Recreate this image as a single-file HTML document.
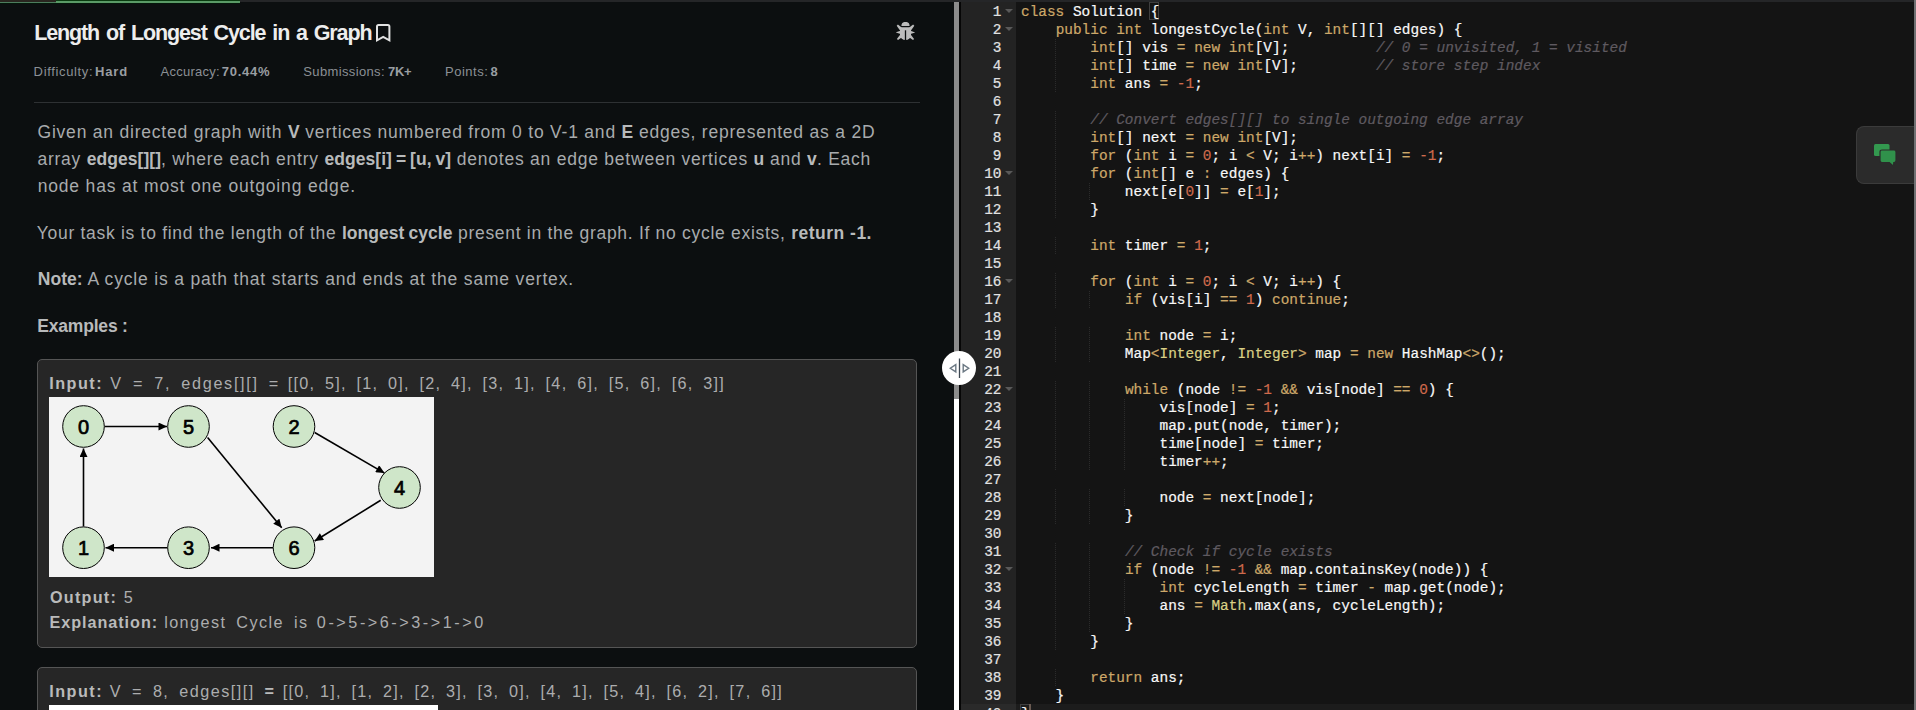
<!DOCTYPE html>
<html lang="en">
<head>
<meta charset="utf-8">
<title>Length of Longest Cycle in a Graph</title>
<style>
html,body{margin:0;padding:0;}
body{width:1916px;height:710px;overflow:hidden;background:#0c0f10;position:relative;font-family:"Liberation Sans",sans-serif;}
.abs{position:absolute;}
#topstrip{left:0;top:0;width:1916px;height:2px;background:#252628;}
#prog0{left:0;top:0;width:56px;height:3px;background:linear-gradient(#2a2620 66.6%,#4d7d5e 66.6%);}
#prog1{left:0;top:3px;width:240px;height:1px;background:#04170a;}
#prog{left:56px;top:0;width:184px;height:3px;background:linear-gradient(#0a3a10 33.3%,#5a9a66 33.3%);}
/* left panel text */
.t{position:absolute;white-space:pre;margin:0;}
#title{word-spacing:2px;font-size:21.5px;font-weight:bold;color:#ededed;line-height:30px;}
.st{font-size:13px;color:#8b9095;line-height:20px;}
.st b{color:#9a9ea2;}
#hr{left:34px;top:102px;width:886px;height:1px;background:#2e3133;}
.p{font-size:17.5px;color:#a8abad;line-height:27px;}
.p b{color:#b8babb;letter-spacing:0.05px;word-spacing:-1px;}
.p b.f{letter-spacing:inherit;word-spacing:0;}
.box{position:absolute;left:37px;width:878px;background:#262626;border:1px solid #555;border-radius:5px;}
.pre{word-spacing:4px;font-size:16.2px;color:#acadae;line-height:25px;}
.pre b{color:#b9baba;}
/* editor */
#sgap{left:959px;top:2px;width:2px;height:708px;background:#060606;}
#sbar1{left:954px;top:2px;width:5px;height:397px;background:#8c8c8c;}
#sbar2{left:954px;top:399px;width:5px;height:311px;background:#ffffff;}
#gutter{left:961px;top:2px;width:55px;height:708px;background:#232323;overflow:hidden;}
#editor{left:1016px;top:2px;width:900px;height:708px;background:#141414;overflow:hidden;}
#active{left:0;top:702px;width:900px;height:18px;background:#1c1c1c;}
#gactive{left:0;top:702px;width:55px;height:18px;background:#2a2a2a;}
.brk{position:absolute;width:8px;height:16px;border:1px solid #3f3f3f;}
#cursor{left:13px;top:702px;width:2px;height:18px;background:#6b5b52;}
.mono{font-family:"Liberation Mono",monospace;font-size:14.43px;line-height:18px;-webkit-text-stroke:0.2px;}
.gn{height:18px;color:#e2e2e2;text-align:right;padding-right:14.5px;position:relative;white-space:pre;}
.fw{position:absolute;right:3px;top:6px;width:0;height:0;border-left:4px solid transparent;border-right:4px solid transparent;border-top:4px solid #595959;}
#code{left:5px;top:1px;color:#f8f8f8;}
.ln{height:18px;white-space:pre;}
.k{color:#cda869;}
.n{color:#cf6a4c;}
.s{color:#dad085;}
.c{color:#5f5a60;font-style:italic;}
.ig{display:inline-block;height:18px;vertical-align:top;background:repeating-linear-gradient(to bottom,#2b2b2b 0,#2b2b2b 1px,transparent 1px,transparent 2px) right top/1px 100% no-repeat;}
#chat{left:1856px;top:126px;width:57px;height:56px;background:#2b2b2b;border:1px solid #3b3b3b;border-right:none;border-radius:8px 0 0 8px;}
#redge{left:1914px;top:0;width:2px;height:710px;background:#707173;}
#title{left:34.14px;top:18px;letter-spacing:-1.111px;}
#s1a{left:33.6px;top:62px;letter-spacing:0.651px;}
#s1b{left:94.99px;top:62px;letter-spacing:0.885px;}
#s2a{left:160.54px;top:62px;letter-spacing:0.247px;}
#s2b{left:221.87px;top:62px;letter-spacing:0.699px;}
#s3a{left:303.34px;top:62px;letter-spacing:0.36px;}
#s3b{left:387.94px;top:62px;letter-spacing:-0.248px;}
#s4a{left:445.08px;top:62px;letter-spacing:0.493px;}
#s4b{left:490.54px;top:62px;letter-spacing:0px;}
#p1a{left:37.53px;top:119px;letter-spacing:0.786px;}
#p1b{left:37.4px;top:146px;letter-spacing:0.767px;}
#p1c{left:37.65px;top:173px;letter-spacing:0.837px;}
#p2{left:36.77px;top:220px;letter-spacing:0.706px;}
#p3{left:37.71px;top:266px;letter-spacing:0.824px;}
#p4{left:37.3px;top:313px;letter-spacing:-0.196px;}
#e1a{left:110.36px;top:371px;letter-spacing:1.681px;}
#e1b{left:123.66px;top:585px;letter-spacing:1.079px;}
#e1c{left:164.13px;top:610px;letter-spacing:1.437px;}
#e2a{left:109.76px;top:679px;letter-spacing:1.471px;}
#e1aL{left:49.27px;top:371px;letter-spacing:1.464px;}
#e1a2{left:287.79px;top:371px;letter-spacing:1.254px;}
#e1bL{left:49.92px;top:585px;letter-spacing:1.264px;}
#e1cL{left:49.52px;top:610px;letter-spacing:0.955px;}
#e2aL{left:49.27px;top:679px;letter-spacing:1.464px;}
#e2a2{left:282.67px;top:679px;letter-spacing:1.255px;}
#e1c2{left:316.85px;top:610px;letter-spacing:2.547px;}
</style>
</head>
<body>
<div id="topstrip" class="abs"></div><div id="prog0" class="abs"></div><div id="prog1" class="abs"></div><div id="prog" class="abs"></div>

<!-- LEFT PANEL -->
<div id="title" class="t">Length of Longest Cycle in a Graph</div>
<svg class="abs" style="left:375px;top:23px" width="17" height="21" viewBox="0 0 17 21"><path d="M2 3.600Q2 2.100 3.500 2.100H12.900Q14.400 2.100 14.400 3.600V17.400L8.200 13.900L2 17.400z" fill="none" stroke="#e2e2e2" stroke-width="2" stroke-linejoin="miter"/></svg>
<svg class="abs" id="bug" style="left:896px;top:22px" width="20" height="19" viewBox="0 0 20 19"><g fill="#bcbcbc"><path d="M5.400 4A4.100 4.100 0 0 1 13.600 4z"/><path d="M4 7Q4 5.300 5.700 5.300H13.300Q15 5.300 15 7V12.500A5.500 5.500 0 0 1 4 12.500z"/><path d="M0.700 3.700L1.900 2.600L6.600 6.200L4.200 8.700z"/><path d="M18.300 3.700L17.100 2.600L12.400 6.200L14.800 8.700z"/><path d="M-0.200 10.400L4.500 8.800V12z"/><path d="M19.200 10.400L14.500 8.800V12z"/><path d="M0.900 17L2 18.100L6.400 15L4.300 12.400z"/><path d="M18.100 17L17 18.100L12.600 15L14.700 12.400z"/><path d="M9.500 8.300V18.200" stroke="#0c0f10" stroke-width="1.300" fill="none"/></g></svg>

<div class="t st" id="s1a">Difficulty:</div><div class="t st" id="s1b"><b>Hard</b></div>
<div class="t st" id="s2a">Accuracy:</div><div class="t st" id="s2b"><b>70.44%</b></div>
<div class="t st" id="s3a">Submissions:</div><div class="t st" id="s3b"><b>7K+</b></div>
<div class="t st" id="s4a">Points:</div><div class="t st" id="s4b"><b>8</b></div>
<div id="hr" class="abs"></div>

<div class="t p" id="p1a">Given an directed graph with <b>V</b> vertices numbered from 0 to V-1 and <b>E</b> edges, represented as a 2D</div>
<div class="t p" id="p1b">array <b>edges[][]</b>, where each entry <b>edges[i] = [u, v]</b> denotes an edge between vertices <b>u</b> and <b>v</b>. Each</div>
<div class="t p" id="p1c">node has at most one outgoing edge.</div>
<div class="t p" id="p2">Your task is to find the length of the <b>longest cycle</b> present in the graph. If no cycle exists, <b style="letter-spacing:.5px;word-spacing:0">return -1.</b></div>
<div class="t p" id="p3"><b>Note:</b> A cycle is a path that starts and ends at the same vertex.</div>
<div class="t p" id="p4"><b class="f">Examples :</b></div>

<div class="box" style="top:359px;height:287px"></div>
<div class="t pre" id="e1aL"><b>Input:</b></div><div class="t pre" id="e1a">V = 7, edges[][] =</div><div class="t pre" id="e1a2">[[0, 5], [1, 0], [2, 4], [3, 1], [4, 6], [5, 6], [6, 3]]</div>
<svg class="abs" id="g1" style="left:49px;top:397px" width="385" height="180" viewBox="0 0 385 180">
<defs><marker id="ah" markerWidth="10" markerHeight="8" refX="9" refY="4" orient="auto" markerUnits="userSpaceOnUse"><path d="M0.500 0L9 4L0.500 8z" fill="#000"/></marker></defs>
<rect width="385" height="180" fill="#f3f3f3"/>
<g stroke="#000" stroke-width="1.600" fill="none" marker-end="url(#ah)">
<path d="M55.500 29.500H118"/><path d="M34.500 129.500V51.500"/><path d="M265.700 35.500L335.500 76.100"/><path d="M118.500 150.700H56.500"/><path d="M331.700 103.300L265.700 144"/><path d="M158.600 40.600L232.700 130.700"/><path d="M224 150.700H162"/>
</g>
<g fill="#cfe6c9" stroke="#000" stroke-width="1">
<circle cx="34.500" cy="29.500" r="20.800"/><circle cx="139.500" cy="29.500" r="20.800"/><circle cx="245" cy="29.500" r="20.800"/><circle cx="350.500" cy="90.500" r="20.800"/><circle cx="34.500" cy="150.700" r="20.800"/><circle cx="139.500" cy="150.700" r="20.800"/><circle cx="245" cy="150.700" r="20.800"/>
</g>
<g font-family="Liberation Sans, sans-serif" font-size="20" fill="#000" stroke="#000" stroke-width="0.700" text-anchor="middle">
<text x="34.500" y="36.800">0</text><text x="139.500" y="36.800">5</text><text x="245" y="36.800">2</text><text x="350.500" y="97.800">4</text><text x="34.500" y="158">1</text><text x="139.500" y="158">3</text><text x="245" y="158">6</text>
</g>
</svg>
<div class="t pre" id="e1bL"><b>Output:</b></div><div class="t pre" id="e1b">5</div>
<div class="t pre" id="e1cL"><b>Explanation:</b></div><div class="t pre" id="e1c">longest Cycle is</div><div class="t pre" id="e1c2">0-&gt;5-&gt;6-&gt;3-&gt;1-&gt;0</div>

<div class="box" style="top:667px;height:60px"></div>
<div class="t pre" id="e2aL"><b>Input:</b></div><div class="t pre" id="e2a">V = 8, edges[][] <b>=</b></div><div class="t pre" id="e2a2">[[0, 1], [1, 2], [2, 3], [3, 0], [4, 1], [5, 4], [6, 2], [7, 6]]</div>
<div class="abs" style="left:49px;top:705px;width:389px;height:10px;background:#fff"></div>

<!-- SPLITTER / SCROLLBAR -->
<div id="sgap" class="abs"></div><div id="sbar1" class="abs"></div><div id="sbar2" class="abs"></div>

<!-- EDITOR -->
<div id="gutter" class="abs mono"><div id="gactive" class="abs"></div><div style="height:1px"></div>
<div class="gn">1<i class="fw"></i></div><div class="gn">2<i class="fw"></i></div><div class="gn">3</div><div class="gn">4</div><div class="gn">5</div><div class="gn">6</div><div class="gn">7</div><div class="gn">8</div><div class="gn">9</div><div class="gn">10<i class="fw"></i></div><div class="gn">11</div><div class="gn">12</div><div class="gn">13</div><div class="gn">14</div><div class="gn">15</div><div class="gn">16<i class="fw"></i></div><div class="gn">17</div><div class="gn">18</div><div class="gn">19</div><div class="gn">20</div><div class="gn">21</div><div class="gn">22<i class="fw"></i></div><div class="gn">23</div><div class="gn">24</div><div class="gn">25</div><div class="gn">26</div><div class="gn">27</div><div class="gn">28</div><div class="gn">29</div><div class="gn">30</div><div class="gn">31</div><div class="gn">32<i class="fw"></i></div><div class="gn">33</div><div class="gn">34</div><div class="gn">35</div><div class="gn">36</div><div class="gn">37</div><div class="gn">38</div><div class="gn">39</div><div class="gn">40</div>
</div>
<div id="editor" class="abs mono">
<div id="active" class="abs"></div><div class="brk" style="left:133px;top:0px"></div><div class="brk" style="left:3.500px;top:702px"></div><div id="cursor" class="abs"></div>
<div id="code" class="abs">
<div class="ln"><span class="k">class</span> Solution {</div><div class="ln">    <span class="k">public</span> <span class="k">int</span> longestCycle(<span class="k">int</span> V, <span class="k">int</span>[][] edges) {</div><div class="ln"><span class="ig">    </span>    <span class="k">int</span>[] vis <span class="k">=</span> <span class="k">new</span> <span class="k">int</span>[V];          <span class="c">// 0 = unvisited, 1 = visited</span></div><div class="ln"><span class="ig">    </span>    <span class="k">int</span>[] time <span class="k">=</span> <span class="k">new</span> <span class="k">int</span>[V];         <span class="c">// store step index</span></div><div class="ln"><span class="ig">    </span>    <span class="k">int</span> ans <span class="k">=</span> <span class="n">-1</span>;</div><div class="ln"></div><div class="ln"><span class="ig">    </span>    <span class="c">// Convert edges[][] to single outgoing edge array</span></div><div class="ln"><span class="ig">    </span>    <span class="k">int</span>[] next <span class="k">=</span> <span class="k">new</span> <span class="k">int</span>[V];</div><div class="ln"><span class="ig">    </span>    <span class="k">for</span> (<span class="k">int</span> i <span class="k">=</span> <span class="n">0</span>; i <span class="k">&lt;</span> V; i<span class="k">++</span>) next[i] <span class="k">=</span> <span class="n">-1</span>;</div><div class="ln"><span class="ig">    </span>    <span class="k">for</span> (<span class="k">int</span>[] e <span class="k">:</span> edges) {</div><div class="ln"><span class="ig">    </span><span class="ig">    </span>    next[e[<span class="n">0</span>]] <span class="k">=</span> e[<span class="n">1</span>];</div><div class="ln"><span class="ig">    </span>    }</div><div class="ln"></div><div class="ln"><span class="ig">    </span>    <span class="k">int</span> timer <span class="k">=</span> <span class="n">1</span>;</div><div class="ln"></div><div class="ln"><span class="ig">    </span>    <span class="k">for</span> (<span class="k">int</span> i <span class="k">=</span> <span class="n">0</span>; i <span class="k">&lt;</span> V; i<span class="k">++</span>) {</div><div class="ln"><span class="ig">    </span><span class="ig">    </span>    <span class="k">if</span> (vis[i] <span class="k">==</span> <span class="n">1</span>) <span class="k">continue</span>;</div><div class="ln"></div><div class="ln"><span class="ig">    </span><span class="ig">    </span>    <span class="k">int</span> node <span class="k">=</span> i;</div><div class="ln"><span class="ig">    </span><span class="ig">    </span>    Map<span class="k">&lt;</span><span class="s">Integer</span>, <span class="s">Integer</span><span class="k">&gt;</span> map <span class="k">=</span> <span class="k">new</span> HashMap<span class="k">&lt;</span><span class="k">&gt;</span>();</div><div class="ln"></div><div class="ln"><span class="ig">    </span><span class="ig">    </span>    <span class="k">while</span> (node <span class="k">!=</span> <span class="n">-1</span> <span class="k">&amp;&amp;</span> vis[node] <span class="k">==</span> <span class="n">0</span>) {</div><div class="ln"><span class="ig">    </span><span class="ig">    </span><span class="ig">    </span>    vis[node] <span class="k">=</span> <span class="n">1</span>;</div><div class="ln"><span class="ig">    </span><span class="ig">    </span><span class="ig">    </span>    map.put(node, timer);</div><div class="ln"><span class="ig">    </span><span class="ig">    </span><span class="ig">    </span>    time[node] <span class="k">=</span> timer;</div><div class="ln"><span class="ig">    </span><span class="ig">    </span><span class="ig">    </span>    timer<span class="k">++</span>;</div><div class="ln"></div><div class="ln"><span class="ig">    </span><span class="ig">    </span><span class="ig">    </span>    node <span class="k">=</span> next[node];</div><div class="ln"><span class="ig">    </span><span class="ig">    </span>    }</div><div class="ln"></div><div class="ln"><span class="ig">    </span><span class="ig">    </span>    <span class="c">// Check if cycle exists</span></div><div class="ln"><span class="ig">    </span><span class="ig">    </span>    <span class="k">if</span> (node <span class="k">!=</span> <span class="n">-1</span> <span class="k">&amp;&amp;</span> map.containsKey(node)) {</div><div class="ln"><span class="ig">    </span><span class="ig">    </span><span class="ig">    </span>    <span class="k">int</span> cycleLength <span class="k">=</span> timer <span class="k">-</span> map.get(node);</div><div class="ln"><span class="ig">    </span><span class="ig">    </span><span class="ig">    </span>    ans <span class="k">=</span> <span class="s">Math</span>.max(ans, cycleLength);</div><div class="ln"><span class="ig">    </span><span class="ig">    </span>    }</div><div class="ln"><span class="ig">    </span>    }</div><div class="ln"></div><div class="ln"><span class="ig">    </span>    <span class="k">return</span> ans;</div><div class="ln">    }</div><div class="ln">}</div>
</div>
</div>
<div id="redge" class="abs"></div>
<div id="chat" class="abs"><svg class="abs" style="left:16px;top:16px" width="26" height="25" viewBox="0 0 26 25"><path d="M2.500 1h12.500q1.500 0 1.500 1.500V11.500q0 1.500-1.500 1.500H2.500Q1 13 1 11.500V2.500Q1 1 2.500 1z" fill="#33994f"/><path d="M9 7h12q2 0 2 2v8.500q0 2-2 2h-0.200l-0.300 3.800-4.200-3.800H9q-2 0-2-2V9q0-2 2-2z" fill="#30914b" stroke="#2b2b2b" stroke-width="1.200"/></svg></div>

<div class="abs" id="knob" style="left:942px;top:351px;width:34px;height:34px;border-radius:17px;background:#fff;">
<svg width="34" height="34" viewBox="0 0 34 34"><path d="M17.500 7.500v19.500" stroke="#3d4852" stroke-width="1.300"/><path d="M13.800 13.600v7.300L8.300 17.250z" fill="none" stroke="#6b7883" stroke-width="1.400" stroke-linejoin="miter"/><path d="M21.200 13.600v7.300L26.700 17.250z" fill="none" stroke="#6b7883" stroke-width="1.400" stroke-linejoin="miter"/></svg>
</div>
</body>
</html>
